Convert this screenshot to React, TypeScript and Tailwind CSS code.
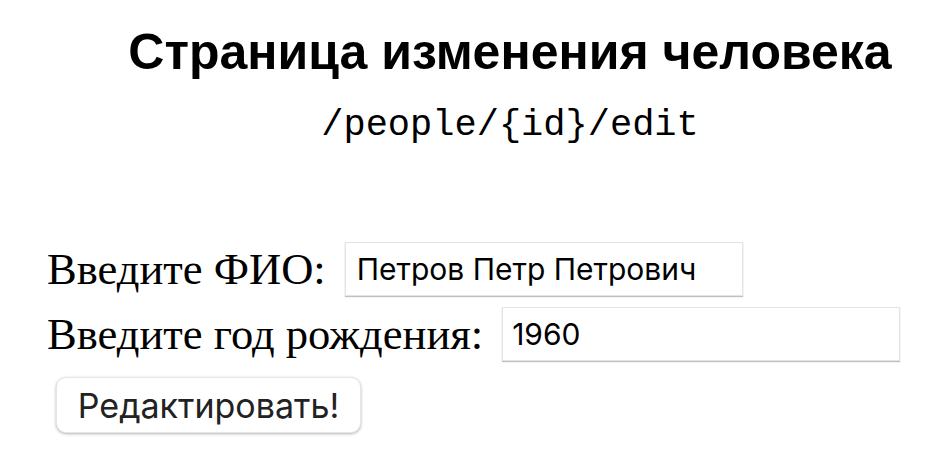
import { useState } from "react";

const App = () => {
  const [fio, setFio] = useState<string>("Петров Петр Петрович");
  const [year, setYear] = useState<string>("1960");

  return (
    <div className="min-h-[473px] w-full bg-white text-black">
      {/* Header */}
      <div className="pl-[70px] pt-[23px] text-center">
        <h1 className="font-['Liberation_Sans',Arial,sans-serif] text-[50px] font-bold leading-[58px]">
          Страница изменения человека
        </h1>
        <p className="mt-[23px] font-['Liberation_Mono','Courier_New',monospace] text-[37px] leading-[42px]">
          /people/{"{id}"}/edit
        </p>
      </div>

      {/* Form */}
      <form
        className="mt-[96px] flex flex-col pl-[47px] font-['Liberation_Serif','Times_New_Roman',serif]"
        onSubmit={(e) => e.preventDefault()}
      >
        <div className="flex items-center gap-[19px]">
          <label className="text-[44.6px] leading-[54px]">Введите ФИО:</label>
          <input
            value={fio}
            onChange={(e) => setFio(e.target.value)}
            className="h-[54px] w-[398px] border border-[#e3e3e3] bg-white px-[11px] font-['Inter','Liberation_Sans',sans-serif] text-[30px] text-black shadow-[0_1px_1px_rgba(0,0,0,0.25)] outline-none"
          />
        </div>
        <div className="mt-[11px] flex items-center gap-[19px]">
          <label className="text-[44.6px] leading-[54px]">Введите год рождения:</label>
          <input
            value={year}
            onChange={(e) => setYear(e.target.value)}
            className="h-[54px] w-[398px] border border-[#e3e3e3] bg-white px-[9px] font-['Inter','Liberation_Sans',sans-serif] text-[30px] text-black shadow-[0_1px_1px_rgba(0,0,0,0.25)] outline-none"
          />
        </div>
        <div className="mt-[16px] pl-[9px]">
          <button
            type="submit"
            className="h-[56px] w-[305px] rounded-[10px] border border-[#e6e6e6] bg-white font-['Inter','Liberation_Sans',sans-serif] text-[34px] text-[#222] shadow-[0_1px_3px_rgba(0,0,0,0.3)]"
          >
            Редактировать!
          </button>
        </div>
      </form>
    </div>
  );
};

export default App;
